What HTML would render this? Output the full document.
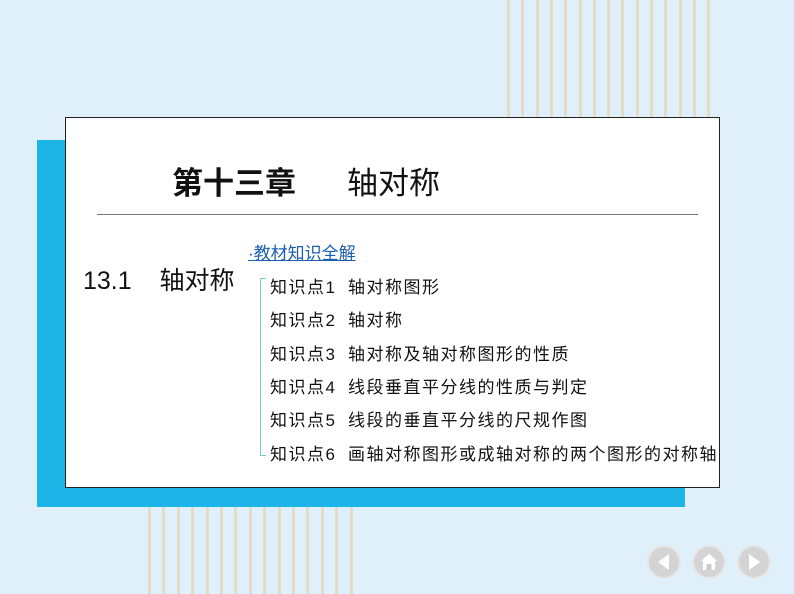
<!DOCTYPE html>
<html><head><meta charset="utf-8"><style>
body{margin:0;width:794px;height:594px;background:#dff0fa;position:relative;overflow:hidden;font-family:"Liberation Sans","Noto Sans CJK SC",sans-serif;}
.ln{position:absolute;width:3px;background:#e3dcc6;}
#blue{position:absolute;left:37px;top:140px;width:648px;height:367px;background:#1db4e8;}
#box{position:absolute;left:65px;top:117px;width:655px;height:371px;background:#fff;border:1px solid #222;box-sizing:border-box;}
.t{position:absolute;white-space:nowrap;color:#111;}
.it{position:absolute;left:204px;font-size:17px;letter-spacing:1.5px;white-space:nowrap;color:#111;}
.it span{display:inline-block;width:78px;}
.nav{position:absolute;top:545px;width:34px;height:34px;border-radius:50%;background:#d4d4d4;border:2px solid #e6e6e6;box-sizing:border-box;}
</style></head><body>
<div id="lines"></div>
<div id="blue"></div>
<div id="box">
<div class="t" style="left:106px;top:40px;font-size:31px;font-weight:bold;">第十三章</div>
<div class="t" style="left:281px;top:40px;font-size:31px;">轴对称</div>
<div style="position:absolute;left:31px;top:96px;width:601px;height:1px;background:#777;"></div>
<div class="t" style="left:17px;top:143px;font-size:25px;">13.1&nbsp;&nbsp;&nbsp;&nbsp;轴对称</div>
<div class="t" style="left:182px;top:121px;font-size:17px;color:#1a5fb0;text-decoration:underline;">·教材知识全解</div>
<div style="position:absolute;left:194px;top:160px;width:5px;height:176px;border-left:1px solid #7cc;border-top:1px solid #7cc;border-bottom:1px solid #7cc;"></div>
<div class="it" style="top:155px"><span>知识点1</span>轴对称图形</div>
<div class="it" style="top:188px"><span>知识点2</span>轴对称</div>
<div class="it" style="top:222px"><span>知识点3</span>轴对称及轴对称图形的性质</div>
<div class="it" style="top:255px"><span>知识点4</span>线段垂直平分线的性质与判定</div>
<div class="it" style="top:288px"><span>知识点5</span>线段的垂直平分线的尺规作图</div>
<div class="it" style="top:322px"><span>知识点6</span>画轴对称图形或成轴对称的两个图形的对称轴</div>
</div>
<div class="nav" style="left:647px"><svg width="30" height="30"><polygon points="9,15 20,7 20,23" fill="#fff"/></svg></div>
<div class="nav" style="left:692px"><svg width="30" height="30"><polygon points="15,7 23,14 21,14 21,23 9,23 9,14 7,14" fill="#fff"/><rect x="12.5" y="17" width="5" height="6" fill="#ccc"/></svg></div>
<div class="nav" style="left:737px"><svg width="30" height="30"><polygon points="21,15 10,7 10,23" fill="#fff"/></svg></div>
<script>
var h='';for(var i=0;i<15;i++){h+='<div class="ln" style="left:'+(507+i*14.3)+'px;top:0;height:117px"></div>';h+='<div class="ln" style="left:'+(148+i*14.4)+'px;top:507px;height:87px"></div>';}
document.getElementById('lines').innerHTML=h;
</script>
</body></html>
